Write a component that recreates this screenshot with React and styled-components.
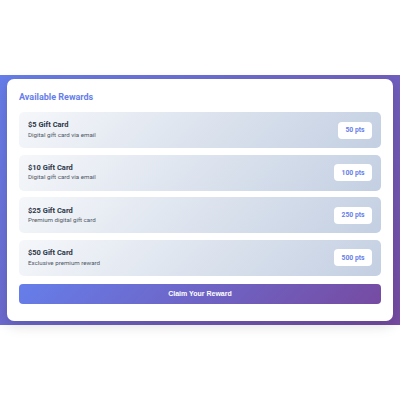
import React from 'react';
import styled, { createGlobalStyle } from 'styled-components';

const GlobalStyle = createGlobalStyle`
  * { box-sizing: border-box; }
  html, body { margin: 0; padding: 0; background: #fff; }
  body {
    font-family: Roboto, "Noto Sans", sans-serif;
  }
  #root {
    min-height: 400px;
    display: flex;
    flex-direction: column;
    justify-content: center;
  }
`;

const Backdrop = styled.div`
  width: 100%;
  padding: 4px 7px;
  background: linear-gradient(135deg, #667eea 0%, #764ba2 100%);
`;

const Card = styled.div`
  background: #fff;
  border-radius: 7px;
  padding: 11px 12px 17px;
  box-shadow: 0 4px 14px rgba(0, 0, 0, 0.15);
`;

const Title = styled.h2`
  margin: 0 0 8px;
  font-size: 9px;
  line-height: 14px;
  font-weight: 700;
  color: #667eea;
`;

const List = styled.div`
  display: flex;
  flex-direction: column;
  gap: 6.6px;
`;

const Item = styled.div`
  height: 36px;
  display: flex;
  align-items: center;
  justify-content: space-between;
  padding: 0 9px;
  border-radius: 5px;
  background: linear-gradient(135deg, #f5f7fa 0%, #c3cfe2 100%);
`;

const Info = styled.div`
  display: flex;
  flex-direction: column;
  gap: 0.5px;
`;

const Name = styled.div`
  font-size: 7.5px;
  line-height: 10px;
  font-weight: 700;
  color: #2d3748;
`;

const Desc = styled.div`
  font-size: 6.2px;
  line-height: 9px;
  color: #4f5766;
`;

const Points = styled.div`
  background: #fff;
  border-radius: 4px;
  height: 17px;
  padding: 0 7.5px;
  display: flex;
  align-items: center;
  font-size: 6.8px;
  font-weight: 700;
  color: #667eea;
`;

const ClaimButton = styled.button`
  margin-top: 8px;
  width: 100%;
  height: 20px;
  border: none;
  border-radius: 4px;
  background: linear-gradient(135deg, #667eea 0%, #764ba2 100%);
  color: #fff;
  font-family: "Liberation Sans", Arial, sans-serif;
  font-size: 7px;
  font-weight: 700;
  cursor: pointer;
`;

const rewards = [
  { name: '$5 Gift Card', desc: 'Digital gift card via email', pts: 50 },
  { name: '$10 Gift Card', desc: 'Digital gift card via email', pts: 100 },
  { name: '$25 Gift Card', desc: 'Premium digital gift card', pts: 250 },
  { name: '$50 Gift Card', desc: 'Exclusive premium reward', pts: 500 },
];

const App = () => {
  return (
    <>
      <GlobalStyle />
      <Backdrop>
        <Card>
          <Title>Available Rewards</Title>
          <List>
            {rewards.map(r => (
              <Item key={r.name}>
                <Info>
                  <Name>{r.name}</Name>
                  <Desc>{r.desc}</Desc>
                </Info>
                <Points>{r.pts} pts</Points>
              </Item>
            ))}
          </List>
          <ClaimButton>Claim Your Reward</ClaimButton>
        </Card>
      </Backdrop>
    </>
  );
};

export default App;
